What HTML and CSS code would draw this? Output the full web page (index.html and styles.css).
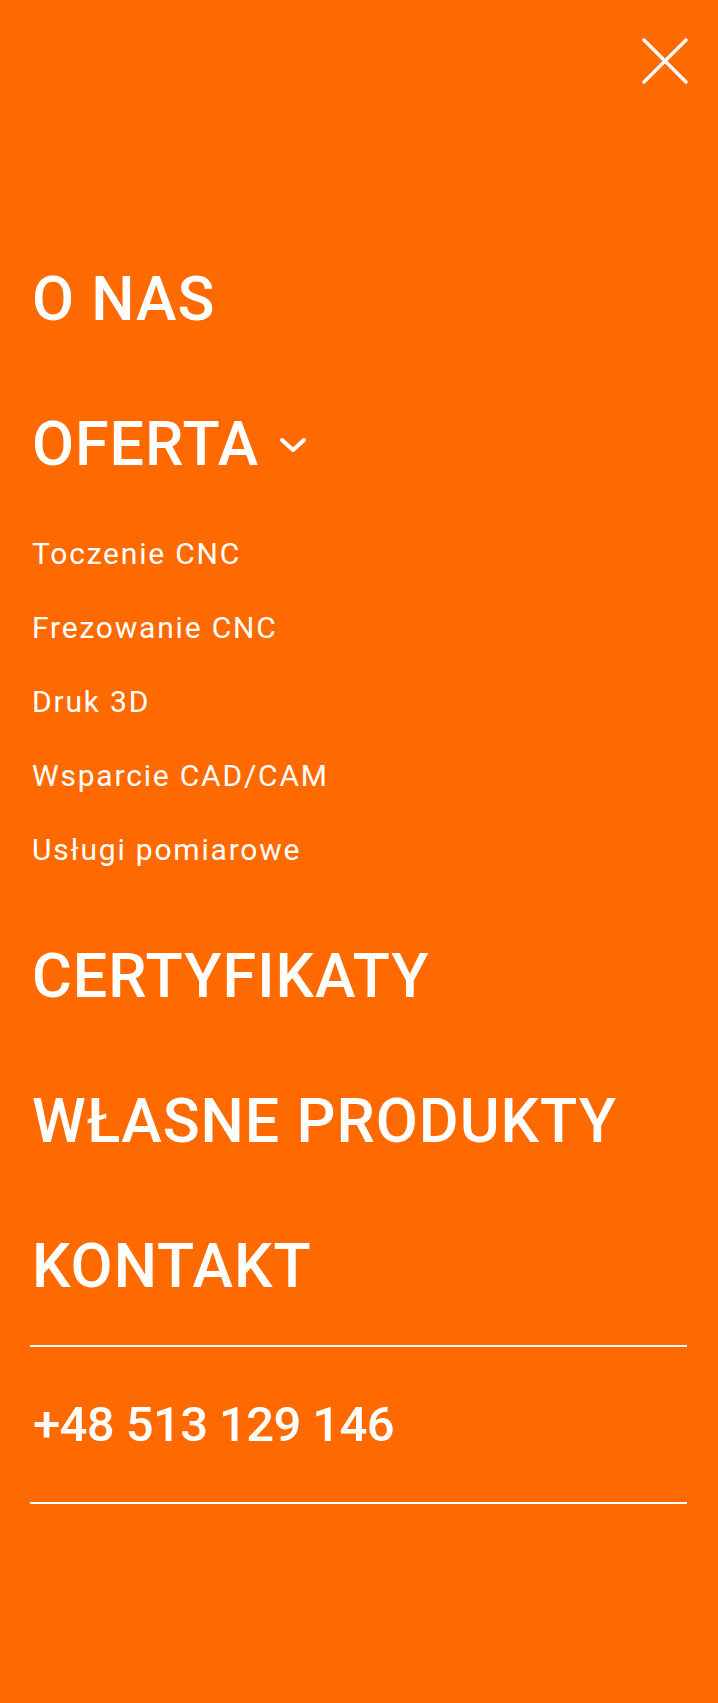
FILE: index.html
```html
<!DOCTYPE html>
<html lang="pl">

<head>
    <meta charset="utf-8">
    <title>Menu</title>
    <link rel="stylesheet" href="styles.css">
</head>

<body>

    <header class="topbar">
        <button class="close" aria-label="Zamknij menu">
            <svg width="48" height="48" viewBox="0 0 48 48">
                <line x1="3" y1="3" x2="45" y2="45" />
                <line x1="45" y1="3" x2="3" y2="45" />
            </svg>
        </button>
    </header>

    <nav class="menu">
        <ul class="menu-list">
            <li><a href="#" class="menu-link">O NAS</a></li>
            <li>
                <a href="#" class="menu-link has-sub">
                    <span>OFERTA</span>
                    <svg class="chevron" width="28" height="16" viewBox="0 0 28 16">
                        <polyline points="3,3 14,13 25,3" />
                    </svg>
                </a>
                <ul class="submenu">
                    <li><a href="#">Toczenie CNC</a></li>
                    <li><a href="#">Frezowanie CNC</a></li>
                    <li><a href="#">Druk 3D</a></li>
                    <li><a href="#">Wsparcie CAD/CAM</a></li>
                    <li><a href="#">Usługi pomiarowe</a></li>
                </ul>
            </li>
            <li><a href="#" class="menu-link">CERTYFIKATY</a></li>
            <li><a href="#" class="menu-link">WŁASNE PRODUKTY</a></li>
            <li><a href="#" class="menu-link">KONTAKT</a></li>
        </ul>

        <div class="contact">
            <a href="tel:+48513129146" class="phone">+48 513 129 146</a>
        </div>
    </nav>

</body>

</html>
```

FILE: styles.css
```css
body {
    margin: 0;
    min-height: 100vh;
    background-color: #ff6a00;
    color: #fff;
    font-family: Roboto, "Liberation Sans", sans-serif;
}

a {
    color: #fff;
    text-decoration: none;
}

ul {
    margin: 0;
    padding: 0;
    list-style: none;
}

/* top bar with the close cross */
.topbar {
    display: flex;
    justify-content: flex-end;
    padding: 37px 29px 0 0;
}

button.close {
    width: 48px;
    height: 48px;
    padding: 0;
    border: 0;
    background: none;
    cursor: pointer;
}

button.close svg {
    display: block;
    stroke: #fff;
    stroke-width: 3.4;
    stroke-linecap: round;
}

.menu {
    margin-top: 142px;
    padding: 0 31px 0 30px;
}

.menu-link {
    display: flex;
    align-items: center;
    gap: 20px;
    padding-left: 2px;
    font-size: 61px;
    font-weight: 500;
    line-height: 145px;
    letter-spacing: 1px;
}

.chevron {
    fill: none;
    stroke: #fff;
    stroke-width: 4;
    stroke-linecap: round;
    stroke-linejoin: round;
}

.submenu {
    margin-bottom: 17px;
}

.submenu a {
    display: block;
    padding-left: 2px;
    font-size: 30px;
    line-height: 74px;
    letter-spacing: 1.8px;
}

.contact {
    margin-top: 6px;
    border-top: 2px solid #fff;
    border-bottom: 2px solid #fff;
}

.phone {
    display: block;
    padding-left: 3px;
    font-size: 49px;
    font-weight: 500;
    line-height: 155px;
    letter-spacing: -0.6px;
}
```
